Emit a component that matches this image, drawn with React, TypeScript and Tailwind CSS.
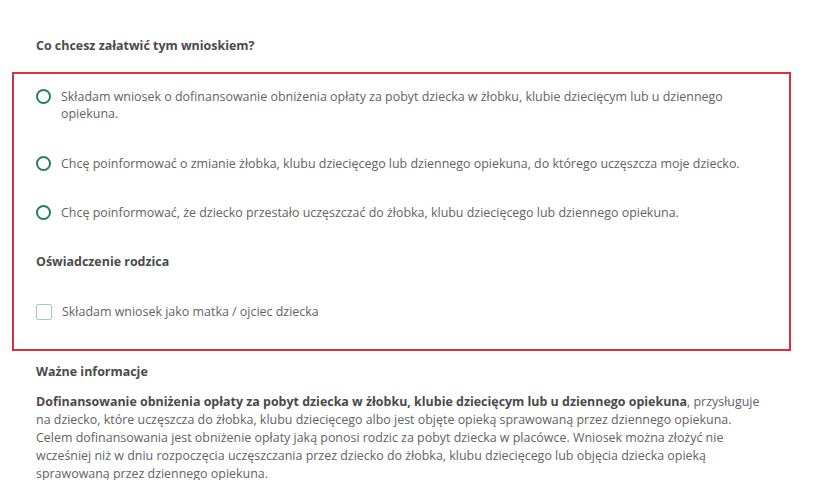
import React, { useState } from 'react';

const options = [
  'Składam wniosek o dofinansowanie obniżenia opłaty za pobyt dziecka w żłobku, klubie dziecięcym lub u dziennego opiekuna.',
  'Chcę poinformować o zmianie żłobka, klubu dziecięcego lub dziennego opiekuna, do którego uczęszcza moje dziecko.',
  'Chcę poinformować, że dziecko przestało uczęszczać do żłobka, klubu dziecięcego lub dziennego opiekuna.',
];

const Radio: React.FC<{ checked: boolean }> = ({ checked }) => (
  <span className="mt-[1px] flex h-[15px] w-[15px] shrink-0 items-center justify-center rounded-full border-[2px] border-[#23805c]">
    {checked && <span className="h-[7px] w-[7px] rounded-full bg-[#23805c]" />}
  </span>
);

export default function App() {
  const [choice, setChoice] = useState<number | null>(null);
  const [parent, setParent] = useState(false);

  return (
    <div
      className="min-h-[480px] w-[840px] bg-white pl-[36px] pr-[73px] pt-[37px] text-[12.45px] leading-[17px] text-[#636363]"
      style={{ fontFamily: '"Open Sans", "Noto Sans", sans-serif' }}
    >
      <h2 className="font-bold text-[#4a4a4a]">Co chcesz załatwić tym wnioskiem?</h2>

      {/* required-field block, highlighted */}
      <div className="-mx-[24px] mt-[18px] border-2 border-[#d8303f] px-[22px] pb-[29px] pt-[14px]">
        {options.map((label, i) => (
          <label
            key={i}
            onClick={() => setChoice(i)}
            className={`flex cursor-pointer items-start gap-[10px] ${i === 1 ? 'mt-[33px]' : i > 1 ? 'mt-[32px]' : ''}`}
          >
            <Radio checked={choice === i} />
            <span>{label}</span>
          </label>
        ))}

        <h3 className="mt-[32px] font-bold text-[#4a4a4a]">Oświadczenie rodzica</h3>

        <label
          onClick={() => setParent(!parent)}
          className="mt-[33px] flex cursor-pointer items-center gap-[10px]"
        >
          <span className="flex h-[16px] w-[16px] shrink-0 items-center justify-center rounded-[2px] border border-[#9fcbb7] bg-white">
            {parent && <span className="h-[8px] w-[8px] bg-[#23805c]" />}
          </span>
          <span>Składam wniosek jako matka / ojciec dziecka</span>
        </label>
      </div>

      <h3 className="mt-[12px] font-bold text-[#4a4a4a]">Ważne informacje</h3>
      <p className="mt-[13px] leading-[18px]">
        <strong className="font-bold text-[#4a4a4a]">
          Dofinansowanie obniżenia opłaty za pobyt dziecka w żłobku, klubie dziecięcym lub u dziennego opiekuna
        </strong>
        , przysługuje na dziecko, które uczęszcza do żłobka, klubu dziecięcego albo jest objęte opieką sprawowaną
        przez dziennego opiekuna. Celem dofinansowania jest obniżenie opłaty jaką ponosi rodzic za pobyt dziecka w
        placówce. Wniosek można złożyć nie wcześniej niż w dniu rozpoczęcia uczęszczania przez dziecko do żłobka,
        klubu dziecięcego lub objęcia dziecka opieką sprawowaną przez dziennego opiekuna.
      </p>
    </div>
  );
}
